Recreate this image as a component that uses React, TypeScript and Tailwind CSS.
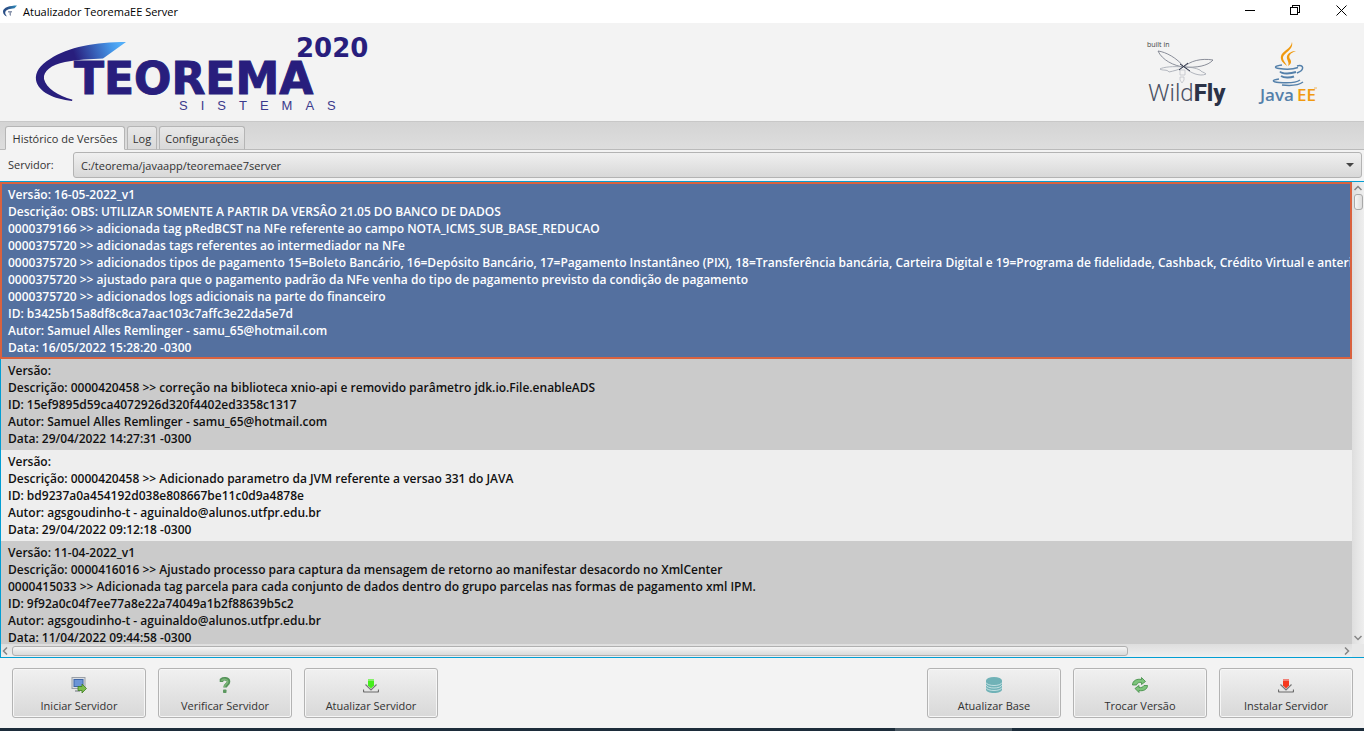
import React from 'react';

type Entry = { lines: string[] };

const entries: Entry[] = [
  {
    lines: [
      'Versão: 16-05-2022_v1',
      'Descrição: OBS: UTILIZAR SOMENTE A PARTIR DA VERSÂO 21.05 DO BANCO DE DADOS',
      '0000379166 >> adicionada tag pRedBCST na NFe referente ao campo NOTA_ICMS_SUB_BASE_REDUCAO',
      '0000375720 >> adicionadas tags referentes ao intermediador na NFe',
      '0000375720 >> adicionados tipos de pagamento 15=Boleto Bancário, 16=Depósito Bancário, 17=Pagamento Instantâneo (PIX), 18=Transferência bancária, Carteira Digital e 19=Programa de fidelidade, Cashback, Crédito Virtual e anterior',
      '0000375720 >> ajustado para que o pagamento padrão da NFe venha do tipo de pagamento previsto da condição de pagamento',
      '0000375720 >> adicionados logs adicionais na parte do financeiro',
      'ID: b3425b15a8df8c8ca7aac103c7affc3e22da5e7d',
      'Autor: Samuel Alles Remlinger - samu_65@hotmail.com',
      'Data: 16/05/2022 15:28:20 -0300',
    ],
  },
  {
    lines: [
      'Versão:',
      'Descrição: 0000420458 >> correção na biblioteca xnio-api e removido parâmetro jdk.io.File.enableADS',
      'ID: 15ef9895d59ca4072926d320f4402ed3358c1317',
      'Autor: Samuel Alles Remlinger - samu_65@hotmail.com',
      'Data: 29/04/2022 14:27:31 -0300',
    ],
  },
  {
    lines: [
      'Versão:',
      'Descrição: 0000420458 >> Adicionado parametro da JVM referente a versao 331 do JAVA',
      'ID: bd9237a0a454192d038e808667be11c0d9a4878e',
      'Autor: agsgoudinho-t - aguinaldo@alunos.utfpr.edu.br',
      'Data: 29/04/2022 09:12:18 -0300',
    ],
  },
  {
    lines: [
      'Versão: 11-04-2022_v1',
      'Descrição: 0000416016 >> Ajustado processo para captura da mensagem de retorno ao manifestar desacordo no XmlCenter',
      '0000415033 >> Adicionada tag parcela para cada conjunto de dados dentro do grupo parcelas nas formas de pagamento xml IPM.',
      'ID: 9f92a0c04f7ee77a8e22a74049a1b2f88639b5c2',
      'Autor: agsgoudinho-t - aguinaldo@alunos.utfpr.edu.br',
      'Data: 11/04/2022 09:44:58 -0300',
    ],
  },
];

function TitleBar() {
  return (
    <div className="flex h-[23px] shrink-0 items-center bg-white">
      <svg className="ml-[3px] h-3.5 w-3.5" viewBox="0 0 14 14" aria-hidden="true">
        <defs>
          <linearGradient id="appIcon" x1="0" x2="1">
            <stop offset="0.3" stopColor="#2a4f86" />
            <stop offset="1" stopColor="#2f8fbf" />
          </linearGradient>
        </defs>
        <path d="M14 0.500C7 0.500 0 2.500 0 6.500c0 2.500 1.500 4 4 5C2.300 9.500 1.800 8 2.500 6.500 3.500 4.200 7 3.700 11.500 3.200z" fill="url(#appIcon)" />
        <path d="M5 6h4v1.500H8V11L6.500 10V7.500H5z" fill="#8b96ad" />
      </svg>
      <h1 className="ml-1.5 flex-1 text-[11px] leading-4 text-black">Atualizador TeoremaEE Server</h1>
      <button aria-label="Minimizar" className="flex h-5 w-[46px] items-center justify-center self-start">
        <svg className="h-[11px] w-[11px]" viewBox="0 0 11 11" shapeRendering="crispEdges"><path d="M0.500 5.500h10" stroke="#000" /></svg>
      </button>
      <button aria-label="Restaurar" className="flex h-5 w-[46px] items-center justify-center self-start">
        <svg className="h-[11px] w-[11px]" viewBox="0 0 11 11" fill="none" stroke="#000" shapeRendering="crispEdges">
          <path d="M0.500 2.500h7v7h-7zM2.500 2.500v-2h7v7h-2" />
        </svg>
      </button>
      <button aria-label="Fechar" className="flex h-5 w-[46px] items-center justify-center self-start">
        <svg className="h-[11px] w-[11px]" viewBox="0 0 11 11" stroke="#000"><path d="M0.500 0.500l10 10M10.500 0.500l-10 10" /></svg>
      </button>
    </div>
  );
}

function TeoremaLogo() {
  return (
    <svg className="h-[84px] w-[344px]" viewBox="32 30 344 84" role="img" aria-label="Teorema Sistemas 2020">
      <defs>
        <linearGradient id="swoosh" gradientUnits="userSpaceOnUse" x1="76" y1="60" x2="120" y2="45">
          <stop offset="0" stopColor="#281e7d" />
          <stop offset="0.8" stopColor="#4596e8" />
          <stop offset="1" stopColor="#52adf8" />
        </linearGradient>
      </defs>
      <path
        d="M126 42C96 42 68 47 50 59C40 65 35 72 36 80C38 92 54 99 72 101C72 100 73 100 72 99.500C58 96 46 88 44 79C43 71 51 65 65 62C77 59.500 91 59 103 58.500Z"
        fill="url(#swoosh)"
      />
      <g fill="#281e7d" fontFamily="DejaVu Sans, sans-serif" fontWeight="700">
        <text x="74" y="94" fontSize="44" stroke="#281e7d" strokeWidth="1">TEOREMA</text>
        <text x="296" y="57" fontSize="26">2020</text>
      </g>
      <text x="179" y="110" fontSize="13" fill="#3b3a8c" fontFamily="Liberation Sans, sans-serif">
        {'S\u2003I\u2003S\u2003T\u2003E\u2003M\u2003A\u2003S'}
      </text>
    </svg>
  );
}

function WildFlyLogo() {
  return (
    <svg className="h-[72px] w-[82px]" viewBox="1146 36 82 72" role="img" aria-label="Built in WildFly">
      <text x="1147" y="47" fontSize="7" fill="#444" fontFamily="Open Sans, sans-serif">built in</text>
      <g fill="none" stroke="#6f7482" strokeWidth="0.8">
        <path d="M1158 51C1166 52 1177 58 1184 67C1174 66 1162 60 1158 51Z" />
        <path d="M1184 67C1190 61 1201 58 1213 60C1208 66 1196 68 1184 67Z" />
        <path d="M1183 67C1174 66 1163 67 1160 69C1163 71 1167 69 1169 72C1173 71 1179 70 1183 67Z" stroke="#a0a4ae" />
        <path d="M1184 67C1190 73 1200 77 1206 74C1204 72 1201 72 1200 70C1196 68 1190 67 1184 67Z" stroke="#a0a4ae" />
        <path d="M1180 70h5v5h-5zM1180 77h4v3l-2 3-2-3z" stroke="#c0c3c9" />
      </g>
      <path d="M1180 64l10 7M1188 63l-9 7" stroke="#2b3247" strokeWidth="1" />
      <text x="1148" y="101" fontSize="24" fill="#2b3247" fontFamily="Roboto, sans-serif">
        <tspan fill="#4a5062" fontWeight="300">Wild</tspan>
        <tspan fontWeight="800">Fly</tspan>
      </text>
    </svg>
  );
}

function JavaLogo() {
  return (
    <svg className="h-[72px] w-[62px]" viewBox="1256 36 62 72" role="img" aria-label="Java EE">
      <g fill="#f09a10">
        <path d="M1292 42C1294 50 1283 53 1283 58C1283 61 1286 63 1287 66C1283 63 1280 60 1281 56C1282 51 1291 49 1292 42Z" />
        <path d="M1296 51C1290 53 1288 56 1290 59C1292 62 1291 64 1288 66C1290 62 1286 60 1287 56C1288 53 1292 51 1296 51Z" />
      </g>
      <g fill="none" stroke="#5480aa" strokeWidth="1.500">
        <path d="M1282 65C1274 66 1274 68 1279 68.500C1286 69.500 1294 69 1298 67.500" />
        <path d="M1297 66C1304 64 1305 70 1297 73" />
        <path d="M1280 71.500C1282 74 1290 74 1296 72" strokeWidth="2" />
        <path d="M1281 76C1284 78 1290 78 1294 76.500" strokeWidth="2" />
        <path d="M1279 79C1271 80 1272 82 1279 82.500C1288 83.300 1296 83 1300 80" />
        <path d="M1282 85C1291 86 1299 85 1303 82" />
      </g>
      <text x="1260" y="101" fontSize="17" fontFamily="Open Sans, sans-serif">
        <tspan fill="#5480aa" fontWeight="600">Java</tspan>
        <tspan fill="#f09a10" fontWeight="600" dx="3">EE</tspan>
      </text>
      <path d="M1314 88h3" stroke="#f0b95a" />
    </svg>
  );
}

function Tabs() {
  const idle = 'bg-linear-to-b from-[#e8e8e8] to-[#d9d9d9] border-b-[#bababa]';
  const base = 'h-6 whitespace-nowrap rounded-t-[3px] border border-[#b5b5b5] pt-px text-[11px] leading-4 text-[#323232]';
  return (
    <div role="tablist" className="flex h-7 shrink-0 items-end gap-0.5 bg-linear-to-b from-[#d4d4d4] to-[#dedede] pl-[5px] shadow-[inset_0_-1px_0_#bababa]">
      <button role="tab" aria-selected="true" className={`${base} w-[120px] border-b-[#f4f4f4] bg-[#f4f4f4]`}>Histórico de Versões</button>
      <button role="tab" aria-selected="false" className={`${base} w-[30px] ${idle}`}>Log</button>
      <button role="tab" aria-selected="false" className={`${base} w-[86px] ${idle}`}>Configurações</button>
    </div>
  );
}

const icons = {
  start: (
    <>
      <rect x="1" y="0.500" width="13" height="11" fill="#d9dde2" stroke="#9a9fa6" />
      <rect x="3" y="2.500" width="9" height="7" fill="#6c95d6" stroke="#3e66a8" />
      <path d="M4 13h5v2H4z" fill="#a7abb0" />
      <path d="M7 9.500h4V7l4.500 4.500L11 16v-2.500H7z" fill="#7cbd4e" stroke="#3f7d22" strokeWidth="0.800" />
    </>
  ),
  check: (
    <>
      <path d="M4.500 5V2.800C6 1.500 11.500 1 11.500 4.800C11.500 7.500 8 7.500 8 10.500" fill="none" stroke="#55935a" strokeWidth="3.600" />
      <path d="M5 4V3C6.500 2 10.800 2 10.800 4.800C10.800 7 7.500 7.500 7.500 10" fill="none" stroke="#7cb678" strokeWidth="1.500" />
      <rect x="6" y="12.500" width="3.500" height="3.500" rx="0.800" fill="#5c9860" />
    </>
  ),
  green: (
    <>
      <path d="M0.500 12.500v1.500q0 1 1 1h13q1 0 1-1v-1.500" fill="none" stroke="#6b6b6b" strokeWidth="1.200" />
      <path d="M2.500 7.500L8 13l5.500-5.500" fill="none" stroke="#777" strokeWidth="1.200" />
      <path d="M5 2h6v6.500L8 11.500 5 8.500z" fill="#46ee1c" />
      <path d="M5 2h6v2H5z" fill="#86ef6b" />
    </>
  ),
  red: (
    <>
      <path d="M0.500 12.500v1.500q0 1 1 1h13q1 0 1-1v-1.500" fill="none" stroke="#6b6b6b" strokeWidth="1.200" />
      <path d="M2.500 7.500L8 13l5.500-5.500" fill="none" stroke="#777" strokeWidth="1.200" />
      <path d="M5 2h6v6.500L8 11.500 5 8.500z" fill="#f5391e" />
      <path d="M5 2h6v2H5z" fill="#f08076" />
    </>
  ),
  base: (
    <>
      <path d="M0 3.500v9C0 14.500 3.500 16 8 16s8-1.500 8-3.500v-9z" fill="#70b2b7" />
      <ellipse cx="8" cy="3.500" rx="8" ry="3.500" fill="#70b2b7" />
      <path d="M0 5.500c1 4 15 4 16 0M0 8c1 4 15 4 16 0M0 10.500c1 4 15 4 16 0" fill="none" stroke="#d7ebec" strokeWidth="0.800" />
    </>
  ),
  swap: (
    <g fill="#7cc47a" stroke="#3d8a42" strokeWidth="0.800">
      <path d="M0.500 8C0.500 3.500 5 1.500 9.500 2.500V0.500L13.500 4.500 9.500 7.500V5.500C7 5 5 6 4.500 8z" />
      <path d="M15.500 8.500C15.500 12.500 11 14.500 7 13.500v2L3 11.500 7 8.500v2c2.500 0.500 4-0.500 5-2z" />
    </g>
  ),
};

function ActionButton({ icon, label }: { icon: keyof typeof icons; label: string }) {
  return (
    <button className="flex h-[50px] w-[134px] flex-col items-center rounded-[3px] border border-[#b3b3b3] bg-linear-to-b from-[#f0f0f0] to-[#d8d8d8] pt-2 text-[11px] leading-4 text-[#323232] shadow-[inset_0_0_0_1px_#f6f6f6]">
      <svg className="mb-[5px] h-4 w-4" viewBox="0 0 16 16" aria-hidden="true">{icons[icon]}</svg>
      {label}
    </button>
  );
}

function Chevron({ d }: { d: string }) {
  return (
    <svg className="h-2 w-2 shrink-0" viewBox="0 0 8 8" fill="none" stroke="#858585" strokeWidth="1.500" aria-hidden="true"><path d={d} /></svg>
  );
}

const tones = ['bg-[#cbcbcb]', 'bg-[#eeeeee]', 'bg-[#cbcbcb]'];

function VersionList() {
  return (
    <div className="grid min-h-0 flex-1 grid-cols-[minmax(0,1fr)_12px] grid-rows-[minmax(0,1fr)_13px] border-y border-[#039ed3] bg-[#e8e8e8]">
      <ul className="overflow-hidden whitespace-nowrap text-[12px] font-semibold leading-[17px] text-[#111]">
        {entries.map((entry, i) => (
          <li
            key={i}
            className={i === 0 ? 'overflow-hidden border-2 border-[#d9623f] bg-[#54709f] px-1.5 pt-0.5 pb-px text-white' : `border-l border-[#039ed3] py-[3px] pl-[7px] ${tones[i - 1]}`}
          >
            {entry.lines.map((line, n) => <p key={n}>{line}</p>)}
          </li>
        ))}
      </ul>
      <div className="flex flex-col items-center bg-linear-to-r from-[#dedede] to-[#efefef] py-0.5">
        <Chevron d="M0.500 6L4 2.500 7.500 6" />
        <div className="mt-0.5 h-4 w-[9px] rounded-[3px] border border-[#a9a9a9] bg-linear-to-r from-[#f6f6f6] to-[#dcdcdc]" />
        <div className="flex-1" />
        <Chevron d="M0.500 2L4 5.500 7.500 2" />
      </div>
      <div className="flex items-center border-l border-[#039ed3] bg-linear-to-b from-[#dedede] to-[#efefef] pr-px">
        <Chevron d="M6 0.500L2.500 4 6 7.500" />
        <div className="mx-[3px] flex-1">
          <div className="h-2.5 w-[84%] rounded-[3px] border border-[#b0b0b0] bg-linear-to-b from-[#f4f4f4] to-[#dadada]" />
        </div>
        <Chevron d="M2 0.500L5.500 4 2 7.500" />
      </div>
    </div>
  );
}

export default function App() {
  return (
    <div className="flex h-screen flex-col overflow-hidden bg-[#f3f3f3] font-['Open_Sans',sans-serif]">
      <TitleBar />
      <header className="flex h-[99px] shrink-0 items-center justify-between border-b border-[#c8c8c8] pr-[46px] pl-8">
        <TeoremaLogo />
        <div className="flex gap-7">
          <WildFlyLogo />
          <JavaLogo />
        </div>
      </header>
      <Tabs />
      <div className="flex h-[31px] shrink-0 items-center pr-0.5 pb-px pl-2">
        <label htmlFor="servidor" className="w-[65px] text-[11px] leading-4 text-[#323232]">Servidor:</label>
        <div className="grid flex-1 items-center">
          <select
            id="servidor"
            className="col-start-1 row-start-1 h-[26px] w-full appearance-none rounded-[3px] border border-[#b3b3b3] bg-linear-to-b from-[#f0f0f0] to-[#d8d8d8] px-[7px] pt-0.5 text-[11px] leading-4 text-[#323232]"
          >
            <option>C:/teorema/javaapp/teoremaee7server</option>
          </select>
          <svg className="pointer-events-none col-start-1 row-start-1 mr-2 h-1 w-2 justify-self-end" viewBox="0 0 8 4" aria-hidden="true"><path d="M0 0h8L4 4z" fill="#444" /></svg>
        </div>
      </div>
      <VersionList />
      <footer className="flex h-[70px] shrink-0 gap-3 pt-2.5 pr-[11px] pl-3">
        <ActionButton icon="start" label="Iniciar Servidor" />
        <ActionButton icon="check" label="Verificar Servidor" />
        <ActionButton icon="green" label="Atualizar Servidor" />
        <div className="flex-1" />
        <ActionButton icon="base" label="Atualizar Base" />
        <ActionButton icon="swap" label="Trocar Versão" />
        <ActionButton icon="red" label="Instalar Servidor" />
      </footer>
      <div className="flex h-[3px] shrink-0 justify-end bg-[#1c2c3a] pr-[352px]">
        <div className="w-[117px] bg-[#4a5863]" />
      </div>
    </div>
  );
}
